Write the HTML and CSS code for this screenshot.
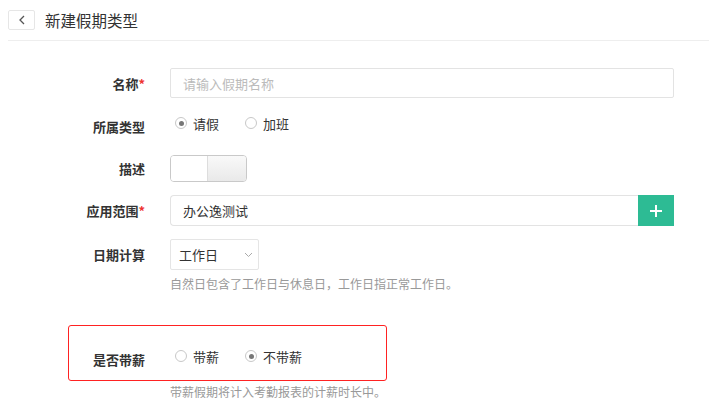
FILE: index.html
```html
<!DOCTYPE html>
<html lang="zh-CN">

<head>
    <meta charset="UTF-8">
    <meta name="viewport" content="width=device-width, initial-scale=1.0">
    <title>新建假期类型</title>
    <link rel="stylesheet" href="styles.css">
</head>

<body>
    <div class="header">
        <span class="back">
            <svg width="8" height="10" viewBox="0 0 8 10"><path d="M6 1L2 5l4 4" fill="none" stroke="#555" stroke-width="1.3"/></svg>
        </span>
        <span class="title">新建假期类型</span>
    </div>

    <div class="form">
        <div class="row row-name">
            <label class="label">名称<i>*</i></label>
            <div class="field">
                <input class="input" type="text" placeholder="请输入假期名称">
            </div>
        </div>

        <div class="row row-type">
            <label class="label">所属类型</label>
            <div class="field radios">
                <span class="radio checked"><b></b>请假</span>
                <span class="radio"><b></b>加班</span>
            </div>
        </div>

        <div class="row row-desc">
            <label class="label">描述</label>
            <div class="field">
                <span class="toggle"><span class="on"></span><span class="off"></span></span>
            </div>
        </div>

        <div class="row row-range">
            <label class="label">应用范围<i>*</i></label>
            <div class="field group">
                <span class="group-text">办公逸测试</span>
                <span class="add">
                    <svg width="12" height="12" viewBox="0 0 12 12"><path d="M6 0v12M0 6h12" stroke="#fff" stroke-width="2"/></svg>
                </span>
            </div>
        </div>

        <div class="row row-date">
            <label class="label">日期计算</label>
            <div class="field">
                <span class="select">工作日
                    <svg width="9" height="6" viewBox="0 0 9 6"><path d="M1 1l3.5 3.5L8 1" fill="none" stroke="#aaa" stroke-width="1"/></svg>
                </span>
            </div>
        </div>
        <p class="help">自然日包含了工作日与休息日，工作日指正常工作日。</p>

        <div class="row row-paid">
            <label class="label">是否带薪</label>
            <div class="field radios">
                <span class="radio"><b></b>带薪</span>
                <span class="radio checked"><b></b>不带薪</span>
            </div>
        </div>
        <p class="help help-paid">带薪假期将计入考勤报表的计薪时长中。</p>

        <div class="mark"></div>
    </div>
</body>

</html>
```

FILE: styles.css
```css
* {
    padding: 0;
    margin: 0;
    box-sizing: border-box;
}

body {
    font-family: "Noto Sans CJK SC", "Liberation Sans", sans-serif;
    font-size: 13px;
    color: #333;
    background-color: #fff;
}

.header {
    display: flex;
    align-items: center;
    height: 41px;
    margin-left: 8px;
    padding-bottom: 1px;
    border-bottom: 1px solid #eee;
}

.back {
    display: flex;
    align-items: center;
    justify-content: center;
    width: 27px;
    height: 20px;
    margin-top: 1px;
    border: 1px solid #e6e6e6;
    border-radius: 2px;
}

.title {
    margin-left: 10px;
    font-size: 15.5px;
    color: #333;
}

.form {
    position: relative;
    padding-top: 27px;
}

.row {
    display: flex;
    align-items: center;
    height: 30px;
}

.label {
    width: 145px;
    margin-right: 25px;
    text-align: right;
    font-weight: 700;
    color: #333;
}

.label i {
    font-style: normal;
    color: #e33;
}

.field {
    width: 504px;
    height: 100%;
    display: flex;
    align-items: center;
}

.input {
    width: 100%;
    height: 30px;
    padding: 0 12px;
    border: 1px solid #e3e3e3;
    border-radius: 2px;
    font: 13px "Noto Sans CJK SC", "Liberation Sans", sans-serif;
    color: #333;
    outline: none;
}

.input::placeholder {
    color: #bbb;
}

.row-type {
    margin-top: 13px;
}

.radios {
    padding-left: 5px;
    padding-bottom: 6px;
}

.radio {
    display: flex;
    align-items: center;
    margin-right: 26px;
    color: #333;
}

.radio b {
    position: relative;
    width: 12px;
    height: 12px;
    margin-right: 6px;
    border: 1px solid #c8c8c8;
    border-radius: 50%;
}

.radio.checked b::after {
    content: "";
    position: absolute;
    left: 2.5px;
    top: 2.5px;
    width: 5px;
    height: 5px;
    border-radius: 50%;
    background-color: #777;
}

.row-desc {
    height: 31px;
    margin-top: 12px;
}

.toggle {
    display: flex;
    width: 77px;
    height: 27px;
    border: 1px solid #c9c9c9;
    border-radius: 4px;
    overflow: hidden;
}

.toggle .on {
    width: 37px;
    background-color: #fff;
    border-right: 1px solid #ddd;
}

.toggle .off {
    flex: 1;
    background: linear-gradient(#f9f9f9, #e9e9e9);
}

.row-range {
    height: 31px;
    margin-top: 11px;
}

.group-text {
    flex: 1;
    height: 31px;
    line-height: 29px;
    padding-left: 12px;
    border: 1px solid #e3e3e3;
    border-right: none;
    border-radius: 4px 0 0 4px;
}

.add {
    display: flex;
    align-items: center;
    justify-content: center;
    width: 36px;
    height: 31px;
    background-color: #2dbb94;
}

.row-date {
    height: 31px;
    margin-top: 13px;
}

.select {
    display: flex;
    align-items: center;
    justify-content: space-between;
    width: 89px;
    height: 31px;
    padding: 0 5px 0 8px;
    border: 1px solid #e5e5e5;
    border-radius: 2px;
}

.help {
    margin: 6px 0 0 170px;
    font-size: 12px;
    line-height: 16px;
    color: #999;
}

.row-paid {
    margin-top: 52px;
}

.help-paid {
    margin-top: 10px;
}

.mark {
    position: absolute;
    left: 68px;
    top: 284px;
    width: 319px;
    height: 56px;
    border: 1.5px solid #f22;
    border-radius: 3px;
}
```
